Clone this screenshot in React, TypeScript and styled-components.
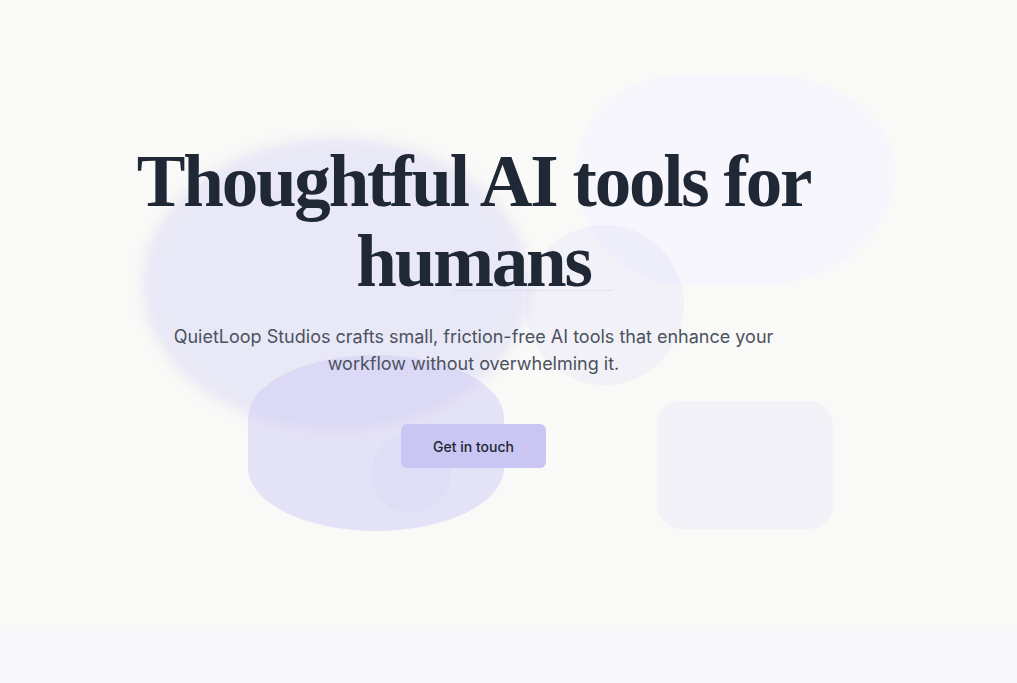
import React from "react";
import styled, { createGlobalStyle } from "styled-components";

const Global = createGlobalStyle`
  html, body { margin: 0; padding: 0; background: #f9f9f7; }
  body { font-family: "Inter", "Liberation Sans", sans-serif; -webkit-font-smoothing: antialiased; }
  * { box-sizing: border-box; }
`;

const Page = styled.div`
  width: 100%;
  min-height: 683px;
  display: flex;
  flex-direction: column;
`;

const Hero = styled.section`
  position: relative;
  height: 628px;
  overflow: hidden;
  background: #f9f9f7;
  display: flex;
  flex-direction: column;
  align-items: center;
  padding: 142px 70px 0 0;
`;

const Decor = styled.div`
  position: absolute;
  inset: 0;
  pointer-events: none;
`;

const Shape = styled.div<{
  $x: number; $y: number; $w: number; $h: number; $c: string; $r: string; $blur?: number;
}>`
  position: absolute;
  left: ${(p) => p.$x}px;
  top: ${(p) => p.$y}px;
  width: ${(p) => p.$w}px;
  height: ${(p) => p.$h}px;
  border-radius: ${(p) => p.$r};
  background: ${(p) => p.$c};
  filter: ${(p) => (p.$blur ? `blur(${p.$blur}px)` : "none")};
`;

const Hairline = styled.div<{ $x: number; $y: number; $w: number }>`
  position: absolute;
  left: ${(p) => p.$x}px;
  top: ${(p) => p.$y}px;
  width: ${(p) => p.$w}px;
  height: 1px;
  background: rgba(199, 196, 246, 0.35);
`;

const Content = styled.div`
  position: relative;
  z-index: 1;
  display: flex;
  flex-direction: column;
  align-items: center;
  text-align: center;
`;

const Title = styled.h1`
  margin: 0;
  font-family: "Liberation Serif", "Times New Roman", serif;
  font-weight: 700;
  font-size: 73px;
  line-height: 80px;
  letter-spacing: -2.2px;
  color: #202836;
  max-width: 720px;
`;

const Lead = styled.p`
  margin: 21px 0 0;
  font-family: "Inter", "Liberation Sans", sans-serif;
  font-size: 18px;
  line-height: 27px;
  color: #4b5260;
  max-width: 640px;
`;

const Button = styled.button`
  margin-top: 47px;
  height: 44px;
  padding: 0 32px;
  border: none;
  border-radius: 6px;
  background: #c9c6f3;
  color: #1f2430;
  font-family: "Inter", "Liberation Sans", sans-serif;
  font-size: 14px;
  font-weight: 500;
  cursor: pointer;
`;

const Next = styled.section`
  flex: 1;
  min-height: 55px;
  background: #f8f8fa;
`;

export default function App() {
  return (
    <Page>
      <Global />
      <Hero>
        <Decor>
          <Shape $x={576} $y={75} $w={319} $h={210} $c="#f6f6fc" $r="32% 40% 42% 34% / 46% 46% 54% 54%" />
          <Shape $x={143} $y={138} $w={386} $h={292} $c="rgba(199,196,246,0.32)" $r="50%" $blur={6} />
          <Shape $x={525} $y={225} $w={159} $h={160} $c="rgba(199,196,246,0.16)" $r="50%" />
          <Shape $x={248} $y={355} $w={256} $h={176} $c="rgba(199,196,246,0.42)" $r="50% / 36%" />
          <Shape $x={371} $y={433} $w={80} $h={80} $c="rgba(199,196,246,0.12)" $r="50%" />
          <Shape $x={657} $y={401} $w={176} $h={128} $c="#f2f2f8" $r="24px" />
          <Hairline $x={453} $y={290} $w={160} />
        </Decor>
        <Content>
          <Title>Thoughtful AI tools for humans</Title>
          <Lead>
            QuietLoop Studios crafts small, friction-free AI tools that enhance your workflow
            without overwhelming it.
          </Lead>
          <Button>Get in touch</Button>
        </Content>
      </Hero>
      <Next />
    </Page>
  );
}
